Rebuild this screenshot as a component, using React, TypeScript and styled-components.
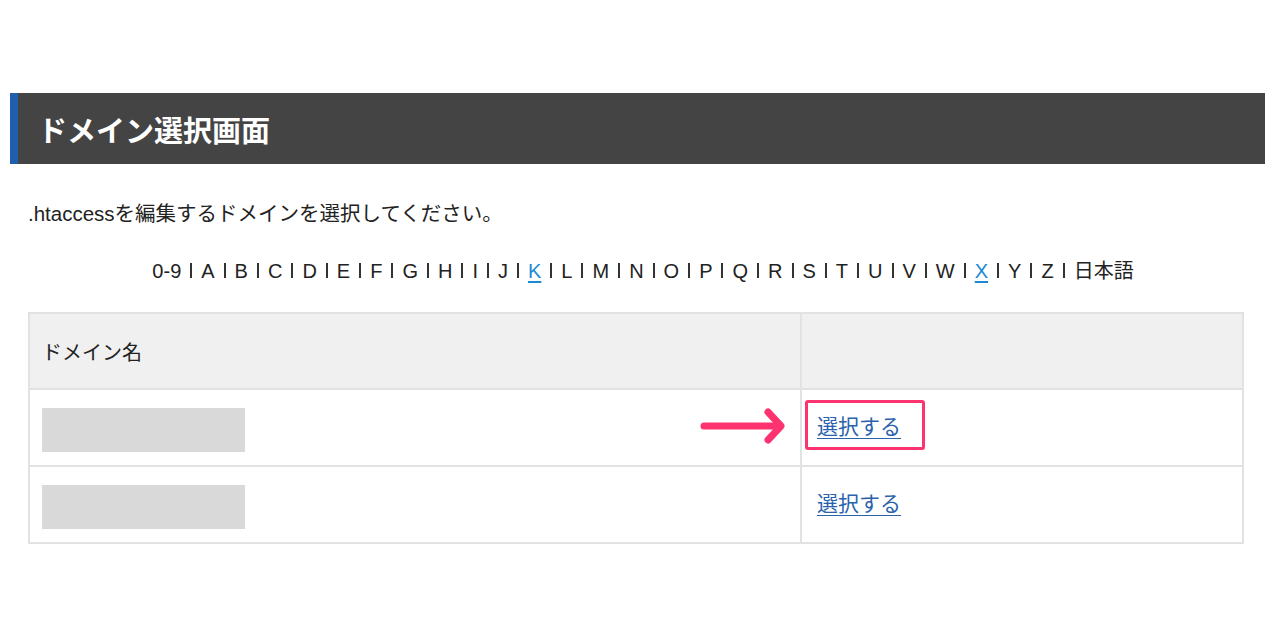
import styled, { createGlobalStyle } from 'styled-components';

const GlobalStyle = createGlobalStyle`
  body {
    margin: 0;
    background: #ffffff;
    font-family: "Liberation Sans", "Noto Sans CJK JP", sans-serif;
    color: #222222;
  }
`;

const Page = styled.div`
  padding-top: 93px;
`;

const TitleBar = styled.h1`
  margin: 0 15px 0 10px;
  height: 71px;
  display: flex;
  align-items: center;
  padding-left: 20px;
  border-left: 8px solid #1f5fad;
  background: #444444;
  color: #ffffff;
  font-size: 29px;
  font-weight: 700;
`;

const Content = styled.div`
  padding: 0 36px 0 28px;
`;

const Intro = styled.p`
  margin: 38px 0 0;
  font-size: 20.5px;
  line-height: 24px;
`;

const Alphabet = styled.nav`
  margin-top: 33px;
  display: flex;
  justify-content: center;
  align-items: center;
  font-size: 20px;
  line-height: 24px;
  color: #222222;
  padding-left: 14px;
`;

const Letter = styled.a<{ $active?: boolean }>`
  color: ${(p) => (p.$active ? '#1a8ad4' : '#222222')};
  text-decoration: ${(p) => (p.$active ? 'underline' : 'none')};
  text-underline-offset: 3px;
`;

const Sep = styled.span`
  display: inline-block;
  width: 2px;
  height: 15px;
  margin: 0 9px;
  background: #333333;
`;

const Table = styled.table`
  margin-top: 29px;
  width: 100%;
  border-collapse: collapse;
  font-size: 20px;
`;

const HeadCell = styled.th`
  height: 74px;
  padding: 0 0 0 12px;
  text-align: left;
  font-weight: 400;
  background: #f0f0f0;
  border: 2px solid #e2e2e2;
`;

// body cells: name cell sits a bit low, link cell a bit high, as in the original
const Cell = styled.td<{ $name?: boolean }>`
  height: ${(p) => (p.$name ? '71px' : '70px')};
  padding: ${(p) => (p.$name ? '4px 0 0 12px' : '0 0 5px 15px')};
  border: 2px solid #e2e2e2;
  width: ${(p) => (p.$name ? '758px' : 'auto')};
`;

const CellInner = styled.div`
  display: flex;
  align-items: center;
  justify-content: space-between;
`;

const Masked = styled.div`
  width: 203px;
  height: 44px;
  background: #d9d9d9;
`;

const SelectLink = styled.a`
  color: #2a62ad;
  font-size: 21px;
  text-decoration: underline;
  text-underline-offset: 4px;
  text-decoration-thickness: 1px;
  cursor: pointer;
`;

const Highlight = styled.span`
  display: inline-block;
  margin-left: -12px;
  padding: 7px 21px 7px 9px;
  border: 3px solid #fd3370;
  border-radius: 3px;
`;

const Arrow = () => (
  <svg width="86" height="40" viewBox="0 0 86 40" style={{ marginRight: 14, marginTop: -8 }}>
    <g stroke="#fd3370" strokeWidth="7" strokeLinecap="round" strokeLinejoin="round" fill="none">
      <line x1="4" y1="20" x2="76" y2="20" />
      <polyline points="68,6 81,20 68,34" />
    </g>
  </svg>
);

const letters = 'ABCDEFGHIJKLMNOPQRSTUVWXYZ'.split('');
const items = ['0-9', ...letters, '日本語'];
const activeLetters = ['K', 'X'];

export default function App() {
  return (
    <Page>
      <GlobalStyle />
      <TitleBar>ドメイン選択画面</TitleBar>
      <Content>
        <Intro>.htaccessを編集するドメインを選択してください。</Intro>
        <Alphabet>
          {items.map((it, i) => (
            <span key={it}>
              {i > 0 && <Sep />}
              <Letter $active={activeLetters.includes(it)}>{it}</Letter>
            </span>
          ))}
        </Alphabet>
        <Table>
          <thead>
            <tr>
              <HeadCell>ドメイン名</HeadCell>
              <HeadCell />
            </tr>
          </thead>
          <tbody>
            <tr>
              <Cell $name>
                <CellInner>
                  <Masked />
                  <Arrow />
                </CellInner>
              </Cell>
              <Cell>
                <Highlight>
                  <SelectLink>選択する</SelectLink>
                </Highlight>
              </Cell>
            </tr>
            <tr>
              <Cell $name>
                <Masked />
              </Cell>
              <Cell>
                <SelectLink>選択する</SelectLink>
              </Cell>
            </tr>
          </tbody>
        </Table>
      </Content>
    </Page>
  );
}
